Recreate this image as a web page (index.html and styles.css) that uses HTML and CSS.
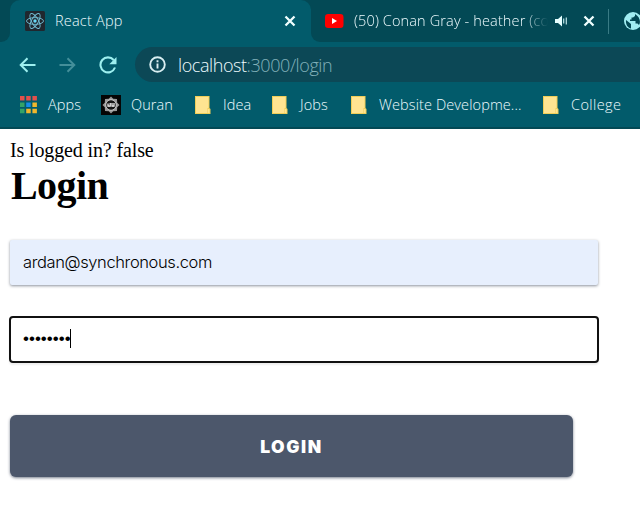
FILE: index.html
```html
<!DOCTYPE html>
<html lang="en">
<head>
<meta charset="utf-8">
<title>React App</title>
<link rel="stylesheet" href="styles.css">
</head>
<body>
<header class="browser">
  <div class="tabs">
    <div class="tab-edge"></div>
    <div class="tab active">
      <svg class="react" width="20" height="20" viewBox="0 0 20 20"><rect width="20" height="20" rx="1.5" fill="#20272e"/><g fill="none" stroke="#72bfd5" stroke-width=".9"><ellipse cx="10" cy="10" rx="8.5" ry="3.4"/><ellipse cx="10" cy="10" rx="8.5" ry="3.4" transform="rotate(60 10 10)"/><ellipse cx="10" cy="10" rx="8.5" ry="3.4" transform="rotate(120 10 10)"/></g><circle cx="10" cy="10" r="1.7" fill="#68d8f5"/></svg>
      <span class="tab-title">React App</span>
      <svg class="close" width="12" height="12" viewBox="0 0 12 12"><path d="M1.5 1.5l9 9m0-9l-9 9"/></svg>
    </div>
    <div class="tab video">
      <svg width="19" height="14" viewBox="0 0 19 14"><rect width="18.5" height="14" rx="3.2" fill="#f00"/><path d="M7 4l5 3-5 3z" fill="#fff"/></svg>
      <span class="tab-title">(50) Conan Gray - heather (co</span>
      <svg class="sound" width="13" height="12" viewBox="0 0 13 12"><path d="M0 4h3l4-3.6v11.2L3 8H0z" fill="#e6ffff"/><path d="M8.7 3.6v4.8M11.3 2.5v7" stroke="#bce2e6" stroke-width="1.2"/></svg>
      <svg class="close" width="12" height="12" viewBox="0 0 12 12"><path d="M1.5 1.5l9 9m0-9l-9 9"/></svg>
    </div>
    <div class="divider"></div>
    <svg class="globe" width="18" height="18" viewBox="0 0 18 18"><circle cx="9" cy="9" r="9" fill="#a0edf2"/><path d="M2 8l5 4v4.500C4 16 1.500 12.500 2 8zM11 2v2L9 5.500H7.500v2H6V9h5.500v2.500h2l1.500 1.500c2-3 1-8-4-11z" fill="#034955"/></svg>
  </div>
  <div class="toolbar">
    <svg class="back" width="17" height="16" viewBox="0 0 17 16"><path d="M16.500 8H2M8.500 1.200L1.700 8l6.800 6.800"/></svg>
    <svg class="forward" width="17" height="16" viewBox="0 0 17 16"><path d="M.5 8H15M8.500 1.200L15.300 8l-6.800 6.800"/></svg>
    <svg class="reload" width="18" height="18" viewBox="0 0 18 18"><path d="M14.700 4A7.500 7.500 0 1 0 16 11.500" fill="none" stroke="#9defef" stroke-width="2.100"/><path d="M17.500 1v7.200h-7.200z" fill="#9defef"/></svg>
    <div class="address">
      <svg width="17" height="17" viewBox="0 0 17 17"><circle cx="8.500" cy="8.500" r="7.300" fill="none" stroke="#d9eef1" stroke-width="1.900"/><path d="M8.500 7.500v5M8.500 4.200v2" stroke="#d9eef1" stroke-width="1.900"/></svg>
      <span class="url"><b>localhost</b>:3000/login</span>
    </div>
  </div>
  <nav class="bookmarks">
    <a class="bookmark apps"><svg width="17" height="18" viewBox="0 0 17 18"><path d="M0 0h4.500v4.500H0zM6.200 0h4.500v4.500H6.200zM12.400 0h4.500v4.500h-4.500z" fill="#e3504b"/><path d="M0 6.500h4.500V11H0zM0 12.700h4.500v4.500H0z" fill="#35a366"/><path d="M6.200 6.500h4.500V11H6.200z" fill="#168de9"/><path d="M6.200 12.700h4.500v4.500H6.200zM12.400 6.500h4.500V11h-4.500zM12.400 12.700h4.500v4.500h-4.500z" fill="#efb62d"/></svg><span>Apps</span></a>
    <a class="bookmark quran"><svg width="20" height="20" viewBox="0 0 20 20"><rect width="20" height="20" fill="#050505"/><path d="M10 1.500l2.200 2.300 3.800.2.200 3.800 2.300 2.200-2.300 2.200-.2 3.800-3.800.2L10 18.500l-2.200-2.300L4 16l-.2-3.800L1.500 10l2.300-2.200L4 4l3.800-.2z" fill="#999"/><circle cx="10" cy="10" r="5.300" fill="#161616" stroke="#d0d0d0"/><path d="M7 8.500v2.700h2.200V8m1.800 0v3.200h2V8" fill="none" stroke="#fff" stroke-width="1.200"/></svg><span>Quran</span></a>
    <a class="bookmark idea"><svg width="16" height="18" viewBox="0 0 16 18"><path d="M0 0h14.500v12l1 1v5H0z" fill="#f0ce58"/><path d="M1 1h12.500v11h-1v5H1z" fill="#ffe491"/><path d="M13 13h1.500v4H13z" fill="#ffe491"/></svg><span>Idea</span></a>
    <a class="bookmark jobs"><svg width="16" height="18" viewBox="0 0 16 18"><path d="M0 0h14.500v12l1 1v5H0z" fill="#f0ce58"/><path d="M1 1h12.500v11h-1v5H1z" fill="#ffe491"/><path d="M13 13h1.500v4H13z" fill="#ffe491"/></svg><span>Jobs</span></a>
    <a class="bookmark website"><svg width="16" height="18" viewBox="0 0 16 18"><path d="M0 0h14.500v12l1 1v5H0z" fill="#f0ce58"/><path d="M1 1h12.500v11h-1v5H1z" fill="#ffe491"/><path d="M13 13h1.500v4H13z" fill="#ffe491"/></svg><span>Website Developme...</span></a>
    <a class="bookmark college"><svg width="16" height="18" viewBox="0 0 16 18"><path d="M0 0h14.500v12l1 1v5H0z" fill="#f0ce58"/><path d="M1 1h12.500v11h-1v5H1z" fill="#ffe491"/><path d="M13 13h1.500v4H13z" fill="#ffe491"/></svg><span>College</span></a>
  </nav>
</header>
<main class="page">
  <div class="status">Is logged in? false</div>
  <h1>Login</h1>
  <form>
    <div class="field filled">ardan@synchronous.com</div>
    <div class="field focused"><span class="dots">••••••••</span><span class="caret"></span></div>
    <button type="button" class="submit">LOGIN</button>
  </form>
</main>
</body>
</html>
```
FILE: styles.css
```css
* { box-sizing: border-box; }
body { margin: 0; width: 640px; height: 511px; overflow: hidden; background: #fff; }
svg { display: block; flex: none; }
.browser { height: 129px; background: #025b6b; border-bottom: 2px solid #034955; color: #effcff; font: 300 14.5px "Open Sans", sans-serif; }
.tabs { display: flex; height: 42px; background: #034955; overflow: hidden; }
.tab-edge { width: 10px; flex: none; background: #025b6b; }
.tab-edge::before { content: ""; display: block; height: 42px; background: #034955; border-bottom-right-radius: 9px; }
.tab { display: flex; align-items: center; flex: none; }
.active { width: 301px; padding: 0 15px 0 15px; background: #025b6b; border-radius: 10px 10px 0 0; }
.tab-title { height: 20px; line-height: 20px; white-space: nowrap; }
.active .tab-title { margin-left: 10px; letter-spacing: .2px; }
.active .close { margin-left: auto; }
.video { width: 297px; padding-left: 14px; background: #034955; border-bottom-left-radius: 9px; box-shadow: -9px 9px 0 #025b6b; }
.video .tab-title { width: 194px; margin-left: 10px; letter-spacing: .13px; mask-image: linear-gradient(to right, #000 87%, transparent 100%); }
.sound { margin-left: 7px; }
.video .close { margin-left: 15px; }
.close path { stroke: #f0ffff; stroke-width: 2.3; }
.divider { width: 1px; height: 25px; margin-top: 9px; background: #397b85; flex: none; }
.globe { margin: 12px 0 0 15px; }
.toolbar { display: flex; align-items: center; height: 45px; padding-left: 19px; }
.back, .forward { fill: none; stroke: #9defef; stroke-width: 2; }
.forward { margin-left: 23px; stroke: #448f9a; }
.reload { margin-left: 23px; }
.address { display: flex; align-items: center; flex: 1; height: 35px; margin-left: 18px; padding-left: 14px; border-radius: 18px 0 0 18px; background: #0c4856; }
.url { margin-left: 12px; color: #82b1ba; font-size: 18px; line-height: 26px; letter-spacing: -.42px; white-space: nowrap; }
.url b { font-weight: 300; color: #effcff; }
.bookmarks { display: flex; align-items: center; height: 36px; padding-left: 20px; }
.bookmark { display: flex; align-items: center; height: 20px; line-height: 20px; letter-spacing: .1px; white-space: nowrap; flex: none; }
.apps { width: 81px; gap: 11px; }
.quran { width: 94px; gap: 10px; }
.idea { width: 77px; gap: 12px; }
.jobs { width: 79px; gap: 12px; }
.website { width: 192px; gap: 12px; }
.college { width: 90px; gap: 12px; letter-spacing: .4px; }
.page { padding: 10px 10px 0; color: #000; }
.status { font: 20px/23px "Liberation Serif", serif; letter-spacing: -.13px; }
h1 { margin: 1px 0 0 1px; font: bold 40px/45px "Liberation Serif", serif; letter-spacing: -.6px; }
.field { display: flex; align-items: center; width: 588px; height: 45px; padding: 0 0 2px 13px; border-radius: 2px; font: 300 16.500px Inter, sans-serif; letter-spacing: -.38px; }
.filled { margin-top: 32px; background: #e7effd; box-shadow: 0 1px 3px #8c929c; }
.focused { width: 590px; height: 47px; margin: 31px 0 0 -1px; border: 2px solid #111; border-radius: 4px; padding: 0 0 2px 12px; box-shadow: 0 2px 2px #eee; }
.dots { font: 17px "Liberation Sans", sans-serif; letter-spacing: 0; }
.caret { width: 1px; height: 19px; margin-left: -1px; background: #000; }
.submit { display: block; width: 563px; height: 62px; margin-top: 52px; padding: 0; border: 0; border-radius: 6px; background: #4c576b; color: #fff; box-shadow: 0 1px 3px #777f8d; font: 900 17.500px Inter, sans-serif; letter-spacing: 1.600px; }
```
